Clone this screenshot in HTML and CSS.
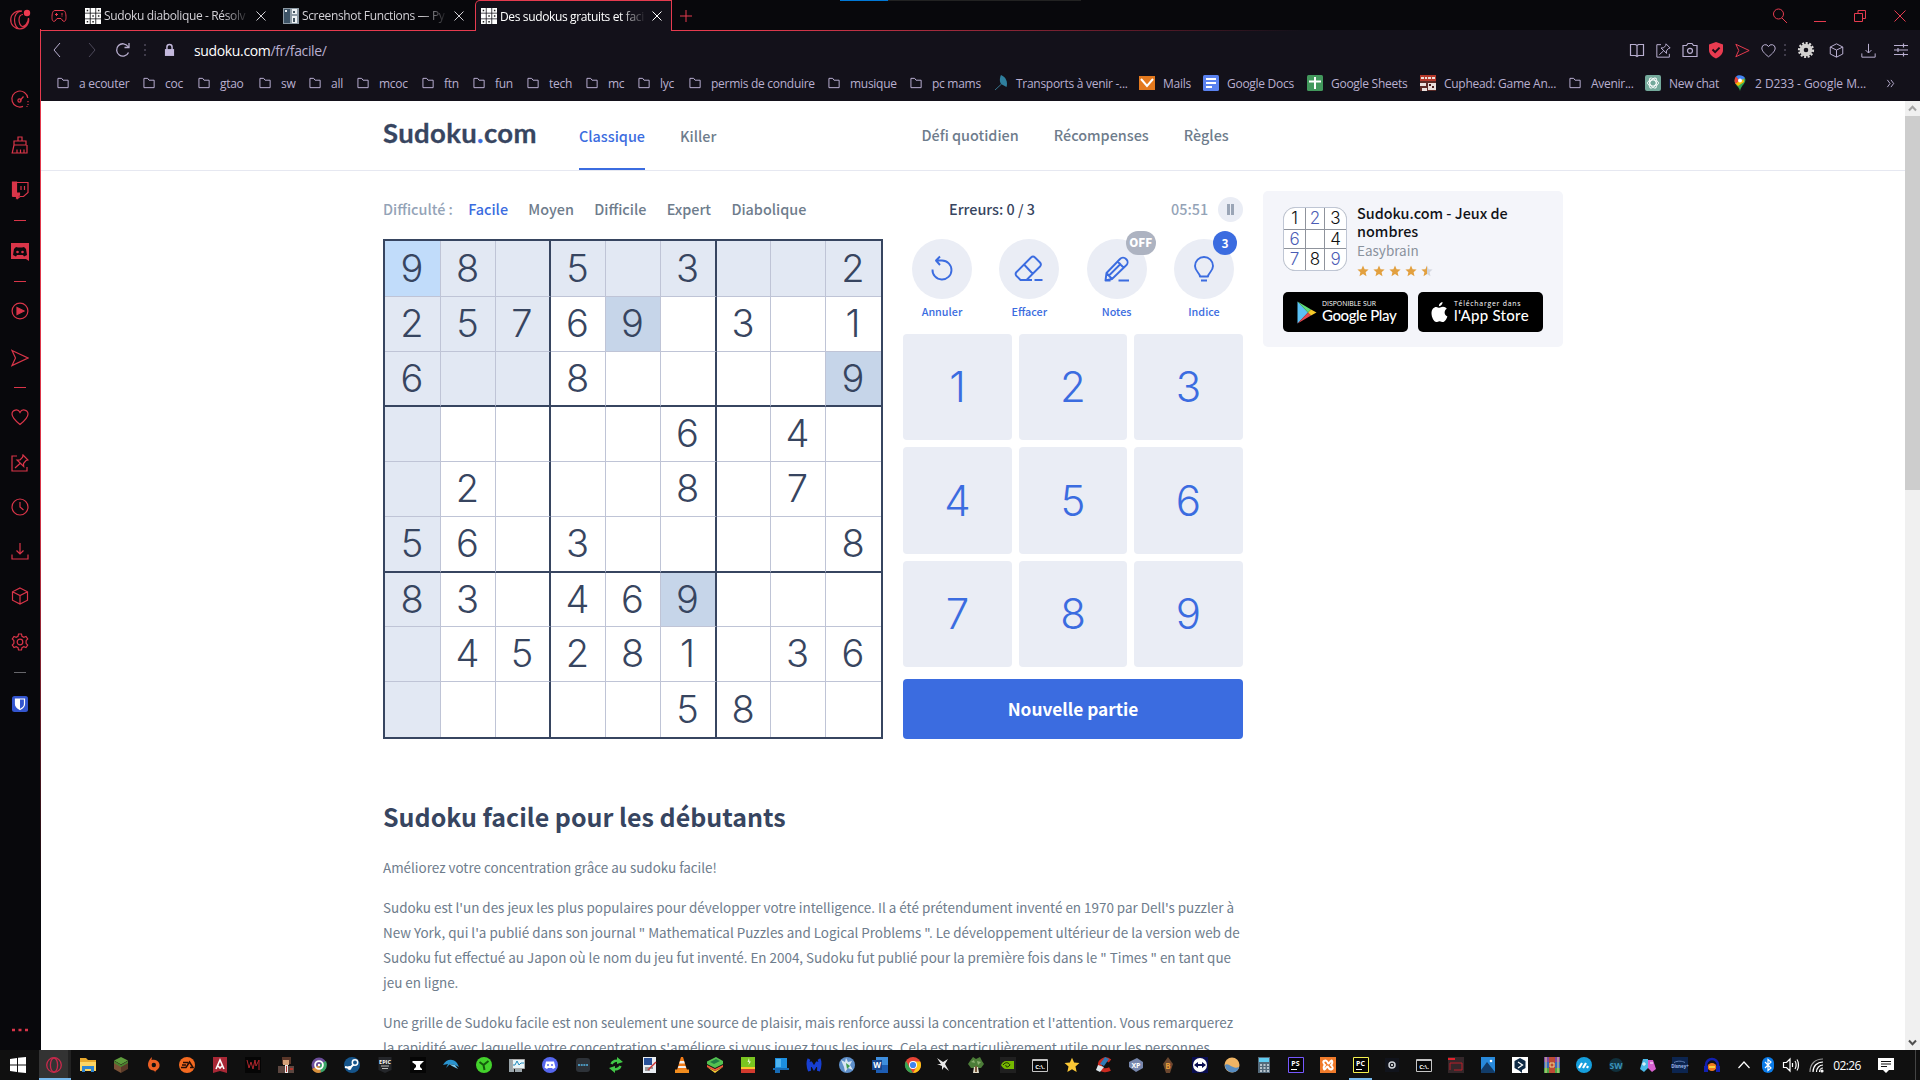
FILE: index.html
```html
<!DOCTYPE html>
<html lang="fr">
<head>
<meta charset="utf-8">
<title>Des sudokus gratuits et faciles</title>
<link rel="stylesheet" href="styles.css">
</head>
<body>
<svg class="defs" width="0" height="0" aria-hidden="true">
  <symbol id="folder" viewBox="0 0 14 12"><path d="M1 1h4l1.500 2H12v8H1z"/></symbol>
  <symbol id="fav" viewBox="0 0 16 16"><path fill="#fff" d="M0 0h4.800v4.800H0zM5.600 0h4.800v4.800H5.600zM11.200 0H16v4.800h-4.800zM0 5.600h4.800v4.800H0zM5.600 5.600h4.800v4.800H5.600zM11.200 5.600H16v4.800h-4.800zM0 11.200h4.800V16H0zM5.600 11.200h4.800V16H5.600zM11.200 11.200H16V16h-4.800z"/><path fill="#222" d="M1.700 1.700h1.500v1.500H1.700zM12.900 1.700h1.500v1.500h-1.500zM7.300 7.300h1.500v1.500H7.300zM1.700 12.900h1.500v1.500H1.700zM7.300 12.900h1.500v1.500H7.300zM12.900 7.300h1.500v1.500h-1.500z"/></symbol>
  <symbol id="close" viewBox="0 0 12 12"><path d="M1.500 1.500l9 9M10.500 1.500l-9 9"/></symbol>
  <symbol id="send" viewBox="0 0 18 18"><path d="M1 1.500L17 9L1 16.500L4.500 9z"/></symbol>
  <symbol id="heart" viewBox="0 0 18 18"><path d="M9 16.500C4 12.500 1 9.500 1 6a4.200 4.200 0 0 1 8-1.600A4.200 4.200 0 0 1 17 6c0 3.500-3 6.500-8 10.500z"/></symbol>
  <symbol id="pin" viewBox="0 0 18 18"><path d="M6 2H1v15h15v-4M12 1l5 5-2 .5-2.500 3 .2 3L6 6l3-.2 2.600-2.600zM9 9.500l-5 4.500"/></symbol>
  <symbol id="download" viewBox="0 0 18 18"><path d="M9 1v11M5.500 8.500L9 12l3.500-3.500M1 12.500V17h16v-4.500"/></symbol>
  <symbol id="cube" viewBox="0 0 18 18"><path d="M9 1l7.500 3.800v8.400L9 17l-7.500-3.800V4.800zM1.500 4.800L9 8.500l7.500-3.700M9 8.500V17"/></symbol>
  <symbol id="star" viewBox="0 0 12 12"><path d="M6 .5l1.600 3.700 4 .3-3 2.700.9 4L6 9.100 2.500 11.200l.9-4-3-2.700 4-.3z"/></symbol>
</svg>

<div class="window">
  <aside class="sidebar">
    <div class="opera-logo"><svg width="22" height="22" viewBox="0 0 22 22"><path d="M13 2.200A9 9 0 1 0 19.500 9M13 2.200C8 2 5.500 6 5.500 11s2.500 9 5.500 9M14 5.500c-2.500 0-4 2.500-4 5.500s1.500 6.500 3.500 6.500S19 15 19.500 9"/><circle cx="18" cy="4" r="3.200" fill="#ee3a50" stroke="none"/></svg></div>
    <div class="s1"><svg viewBox="0 0 18 18"><path d="M12 16.400A8 8 0 1 1 16.800 8M9 10.500l3.500-4M17 11v1.200M17 14v1M15.500 16.500h1"/><circle cx="8.500" cy="10.500" r="1.600"/></svg></div>
    <div><svg viewBox="0 0 18 18"><path d="M7 5V1h4v4M3 5h12v4H3zM3 9L1.200 17H16V9M6 17v-3.500M9.500 17v-3.500M13 17v-3.500"/></svg></div>
    <div><svg viewBox="0 0 18 18"><path d="M2 1.500h15v10l-4.500 4H9l-2.500 2v-2H2z"/><path d="M1.500 1h4v11h3v2l-3 3v-2h-4z" fill="#d93549"/><path d="M10 5v4M13.500 5v4"/></svg></div>
    <hr>
    <div><svg viewBox="0 0 18 18"><path fill="#d93549" stroke="none" d="M0 0h18v18l-3-2H0z"/><path fill="#09090d" stroke="none" d="M5 4l2 .5h4L13 4l2 2 1 6-3 1.500-1-1.500H6l-1 1.500L2 12l1-6z"/><circle cx="6.500" cy="9" r="1.300" fill="#d93549" stroke="none"/><circle cx="11.500" cy="9" r="1.300" fill="#d93549" stroke="none"/></svg></div>
    <hr>
    <div><svg viewBox="0 0 18 18"><circle cx="9" cy="9" r="7.900"/><path fill="#d93549" d="M6 5.500L13 9l-7 3.500z"/></svg></div>
    <div><svg><use href="#send"/></svg></div>
    <hr>
    <div><svg><use href="#heart"/></svg></div>
    <div><svg><use href="#pin"/></svg></div>
    <div><svg viewBox="0 0 18 18"><circle cx="9" cy="9" r="8"/><path d="M9 4v5l3.500 3"/></svg></div>
    <div><svg><use href="#download"/></svg></div>
    <div><svg><use href="#cube"/></svg></div>
    <div><svg viewBox="0 0 18 18"><path d="M7.500 1h3l.5 2.300 1.800 1L15 3.500 16.700 6l-1.600 1.700v2.600L16.700 12 15 14.500l-2.200-.8-1.800 1L10.500 17h-3L7 14.700l-1.800-1-2.200.8L1.300 12l1.600-1.700V7.700L1.300 6 3 3.500l2.200.8 1.800-1z"/><circle cx="9" cy="9" r="2.800"/></svg></div>
    <hr class="grey">
    <div><svg viewBox="0 0 18 18"><rect x="1" y="1" width="16" height="16" rx="2.500" fill="#3355cf" stroke="none"/><path d="M4.500 4h9v5c0 3-2.500 4.500-4.500 5.500C7 13.500 4.500 12 4.500 9z" fill="#3355cf" stroke="#fff"/><path d="M4.500 4H9v10.500C7 13.500 4.500 12 4.500 9z" fill="#fff" stroke="none"/></svg></div>
    <div class="more"><svg viewBox="0 0 18 18"><path fill="#d93549" stroke="none" d="M1 7.700h3v2.600H1zM7.500 7.700h3v2.600h-3zM14 7.700h3v2.600h-3z"/></svg></div>
  </aside>

  <div class="browser">
    <div class="tabbar">
      <span class="pad"><svg width="16" height="14" viewBox="0 0 16 14"><path d="M4 1.500h8c2.500 0 3 3.500 3 7s-1.500 4.500-3 3.500L10 9.500H6L4 12c-1.500 1-3 0-3-3.500s.5-7 3-7zM4 5.500h3M5.500 4v3M10 5h2M11 6.500v1"/></svg></span>
      <div class="tab"><svg class="f"><use href="#fav"/></svg><span class="tt">Sudoku diabolique - Résolv</span><svg class="x"><use href="#close"/></svg></div>
      <div class="tab"><svg class="f" viewBox="0 0 16 16"><path fill="#8d9aa5" d="M0 0h16v16H0z"/><path fill="#3d5366" d="M1 1h6v14H1z"/><path fill="#edf1f4" d="M9 1h5v5H9zM9 8h5v7H9zM2 2h2v2H2z"/><path fill="#40525f" d="M10 3h2v2h-2zM10 10h2v4h-2z"/></svg><span class="tt">Screenshot Functions — Py</span><svg class="x"><use href="#close"/></svg></div>
      <div class="tab active"><svg class="f"><use href="#fav"/></svg><span class="tt">Des sudokus gratuits et faci</span><svg class="x"><use href="#close"/></svg></div>
      <svg class="plus" viewBox="0 0 12 12"><path d="M6 0v12M0 6h12"/></svg>
      <span class="drag"></span>
      <div class="winctl">
        <svg width="16" height="16" viewBox="0 0 16 16"><circle cx="6.500" cy="6" r="5"/><path d="M10 10l5 5"/></svg>
        <svg width="16" height="16" viewBox="0 0 16 16"><path d="M2 13.500h12"/></svg>
        <svg width="16" height="16" viewBox="0 0 16 16"><path d="M2.500 5.500h8v8h-8zM6 5V2.500h7.500V10.500H11"/></svg>
        <svg width="16" height="16" viewBox="0 0 16 16"><path d="M2.500 2.500l11 11M13.500 2.500l-11 11"/></svg>
      </div>
      <i class="edge"></i>
      <i class="loading"></i>
    </div>

    <div class="address">
      <svg class="b1" viewBox="0 0 16 16"><path d="M10 1L4 8l6 7"/></svg>
      <svg class="b2" viewBox="0 0 16 16"><path d="M6 1l6 7-6 7"/></svg>
      <svg class="b3" viewBox="0 0 16 16"><path d="M13.500 10.500A6.200 6.200 0 1 1 13 4.500M14 1v4.500H9.500"/></svg>
      <span class="dots"></span>
      <svg class="lock" viewBox="0 0 12 14"><path d="M1 6h10v7.500H1z"/><path fill="none" stroke="#c4b9dd" stroke-width="1.600" d="M3.200 7V3.800a2.800 2.800 0 0 1 5.600 0V7"/></svg>
      <span class="url"><b>sudoku.com</b>/fr/facile/</span>
      <div class="tools">
        <svg viewBox="0 0 18 18"><path d="M2.500 3.500h5L9 4.500l1.500-1h5v11h-5L9 15.500l-1.500-1h-5zM9 4.500v11"/></svg>
        <svg class="sm"><use href="#pin"/></svg>
        <svg viewBox="0 0 18 18"><path d="M2 4.500h3.500l1.500-2h4l1.500 2H16v11H2z"/><circle cx="9" cy="9.800" r="2.500"/></svg>
        <svg viewBox="0 0 18 18"><path fill="#e93b50" stroke="none" d="M9 1l7 2.500V9c0 4-3 6.500-7 8.500C5 15.500 2 13 2 9V3.500z"/><path stroke="#1b0d17" stroke-width="2" d="M5.500 8.500l2.600 2.600 4.500-4.500"/></svg>
        <svg class="red sm"><use href="#send"/></svg>
        <svg class="sm"><use href="#heart"/></svg>
        <span class="dots"></span>
        <svg viewBox="0 0 18 18"><circle cx="9" cy="9" r="6.800" stroke="#dcdad9" stroke-width="2.600" stroke-dasharray="2 1.500"/><circle cx="9" cy="9" r="4.300" stroke="#d2d0cf" stroke-width="4"/></svg>
        <svg class="sm"><use href="#cube"/></svg>
        <svg class="sm"><use href="#download"/></svg>
        <svg viewBox="0 0 18 18"><path d="M2 4.500h14M2 9h14M2 13.500h14M11.500 2.500v4M6 7v4M11.500 11.500v4"/></svg>
      </div>
    </div>

    <nav class="bookmarks">
      <a><svg><use href="#folder"/></svg>a ecouter</a>
      <a><svg><use href="#folder"/></svg>coc</a>
      <a><svg><use href="#folder"/></svg>gtao</a>
      <a><svg><use href="#folder"/></svg>sw</a>
      <a><svg><use href="#folder"/></svg>all</a>
      <a><svg><use href="#folder"/></svg>mcoc</a>
      <a><svg><use href="#folder"/></svg>ftn</a>
      <a><svg><use href="#folder"/></svg>fun</a>
      <a><svg><use href="#folder"/></svg>tech</a>
      <a><svg><use href="#folder"/></svg>mc</a>
      <a><svg><use href="#folder"/></svg>lyc</a>
      <a><svg><use href="#folder"/></svg>permis de conduire</a>
      <a><svg><use href="#folder"/></svg>musique</a>
      <a><svg><use href="#folder"/></svg>pc mams</a>
      <a><svg class="site s14" viewBox="0 0 14 16"><path fill="#2f7f9e" d="M7 0c5 2 7 7 5.500 12L7 9C5 6 6 2 7 0z"/><path stroke="#36748d" fill="none" d="M7.500 9L1 15"/></svg>Transports à venir -...</a>
      <a><svg class="site" viewBox="0 0 16 16"><path fill="#e3791e" d="M0 1h16v14H0z"/><path stroke="#fff" stroke-width="2" fill="none" d="M2 4l6 7 6-7"/></svg>Mails</a>
      <a><svg class="site" viewBox="0 0 16 16"><rect width="16" height="16" rx="1.500" fill="#5a82f0"/><path stroke="#fff" stroke-width="2" d="M3 4h10M3 8h10M3 12h6"/></svg>Google Docs</a>
      <a><svg class="site" viewBox="0 0 16 16"><rect width="16" height="16" rx="1.500" fill="#42985c"/><path stroke="#fff" stroke-width="2" d="M2 6.500h12M8 2v12"/></svg>Google Sheets</a>
      <a><svg class="site" viewBox="0 0 16 16"><path fill="#b5392b" d="M0 0h16v6H0z"/><path fill="#5a2a26" d="M0 6h16v10H0z"/><path fill="#e9dfdc" d="M1 2h3v2H1zM5 2h2v2H5zM8 2h3v2H8zM12 2h3v2h-3zM0 8h6v3H0zM2 13h5v3H2zM8 8h8v7H8z"/><path fill="#4b2020" d="M9 9h2v2H9zM12 11h2v2h-2z"/></svg>Cuphead: Game An...</a>
      <a><svg><use href="#folder"/></svg>Avenir...</a>
      <a><svg class="site" viewBox="0 0 16 16"><rect width="16" height="16" rx="2" fill="#74a99b"/><g fill="none" stroke="#fff" stroke-width=".9"><ellipse cx="8" cy="8" rx="5.500" ry="3"/><ellipse cx="8" cy="8" rx="5.500" ry="3" transform="rotate(60 8 8)"/><ellipse cx="8" cy="8" rx="5.500" ry="3" transform="rotate(120 8 8)"/></g></svg>New chat</a>
      <a><svg class="site s14" viewBox="0 0 12 16"><path fill="#34a853" d="M6 16C5.500 12 .5 10 .5 5.500L11 3c2 5-4 7-5 13z"/><path fill="#fbbc04" d="M1 8l8-6 1 5-6 4z"/><path fill="#ea4335" d="M.5 6C.5 4 1 2.500 2 1.500L6 5 1.500 9z"/><path fill="#4285f4" d="M2 1.500C4-.5 9-.5 11 3L6 6z"/><circle cx="6" cy="5.500" r="2" fill="#fff"/></svg><span class="wide">2 D233 - Google M...</span></a>
      <a><svg class="chev" viewBox="0 0 10 10"><path d="M1.500 1l3 4-3 4M5.500 1l3 4-3 4"/></svg></a>
    </nav>

    <div class="viewport">
      <div class="page">
        <header class="head">
          <div class="logo">Sudoku<i>.</i>com</div>
          <nav class="modes"><a class="on">Classique</a><a>Killer</a></nav>
          <nav class="links"><a>Défi quotidien</a><a>Récompenses</a><a>Règles</a></nav>
        </header>

        <main class="content">
          <section class="left">
            <div class="levels"><span class="lab">Difficulté :</span><a class="on">Facile</a><a>Moyen</a><a>Difficile</a><a>Expert</a><a>Diabolique</a></div>
            <div class="board">
              <b class="sel">9</b><b class="h">8</b><b class="h"></b><b class="h">5</b><b class="h"></b><b class="h">3</b><b class="h"></b><b class="h"></b><b class="h">2</b>
              <b class="h">2</b><b class="h">5</b><b class="h">7</b><b>6</b><b class="same">9</b><b></b><b>3</b><b></b><b>1</b>
              <b class="h">6</b><b class="h"></b><b class="h"></b><b>8</b><b></b><b></b><b></b><b></b><b class="same">9</b>
              <b class="h"></b><b></b><b></b><b></b><b></b><b>6</b><b></b><b>4</b><b></b>
              <b class="h"></b><b>2</b><b></b><b></b><b></b><b>8</b><b></b><b>7</b><b></b>
              <b class="h">5</b><b>6</b><b></b><b>3</b><b></b><b></b><b></b><b></b><b>8</b>
              <b class="h">8</b><b>3</b><b></b><b>4</b><b>6</b><b class="same">9</b><b></b><b></b><b></b>
              <b class="h"></b><b>4</b><b>5</b><b>2</b><b>8</b><b>1</b><b></b><b>3</b><b>6</b>
              <b class="h"></b><b></b><b></b><b></b><b></b><b>5</b><b>8</b><b></b><b></b>
            </div>
          </section>

          <section class="controls">
            <div class="status"><span class="err">Erreurs: 0 / 3</span><span class="time">05:51</span><span class="pause"></span></div>
            <div class="actions">
              <div class="act"><span class="circle"><svg viewBox="0 0 30 30"><path d="M5.500 15.500A9.500 9.500 0 1 0 15 6.500H9M13 2.500L9 6.500l4 4.500"/></svg></span><span>Annuler</span></div>
              <div class="act"><span class="circle"><svg viewBox="0 0 30 30"><path d="M17 3.500a3 3 0 0 1 4 0l5 5a3 3 0 0 1 0 4L12.500 26H6.500L2.500 22a3 3 0 0 1 0-4zM10.500 11l8 8.500M12.500 26H18M20.500 26H28.500"/></svg></span><span>Effacer</span></div>
              <div class="act"><span class="circle"><svg viewBox="0 0 30 30"><path d="M18 5a4 4 0 0 1 6 0l.5.500a4 4 0 0 1 0 5.500L10 25l-6.500 1.500L4.500 19zM15.500 7.500l6.500 6.500M4.500 19l5.500 6M7 21.500L19 9.500M3.500 26.500h5M16.500 26.500H27"/></svg></span><em class="off">OFF</em><span>Notes</span></div>
              <div class="act"><span class="circle"><svg viewBox="0 0 30 30"><path d="M11 22.500c0-3.500-5-5-5-10.500a9 9 0 0 1 18 0c0 5.500-5 7-5 10.500zM12 26.500h6"/></svg></span><em class="count">3</em><span>Indice</span></div>
            </div>
            <div class="keys"><b>1</b><b>2</b><b>3</b><b>4</b><b>5</b><b>6</b><b>7</b><b>8</b><b>9</b></div>
            <div class="new">Nouvelle partie</div>
          </section>

          <aside class="promo">
            <div class="app">
              <div class="appicon"><b>1</b><b class="u">2</b><b>3</b><b class="u">6</b><b></b><b>4</b><b class="u">7</b><b>8</b><b class="u">9</b></div>
              <div class="appinfo">
                <strong>Sudoku.com - Jeux de<br>nombres</strong>
                <span>Easybrain</span>
                <div class="stars"><svg><use href="#star"/></svg><svg><use href="#star"/></svg><svg><use href="#star"/></svg><svg><use href="#star"/></svg><svg class="half" viewBox="0 0 12 12"><path fill="#d3d7df" d="M6 .5l1.600 3.700 4 .3-3 2.700.9 4L6 9.100z"/><path d="M6 .5v8.600L2.500 11.200l.9-4-3-2.700 4-.3z"/></svg></div>
              </div>
            </div>
            <div class="stores">
              <div class="store play"><svg width="20" height="23" viewBox="0 0 20 23"><path fill="#5bc1f5" d="M.5.500v22L11 11.500z"/><path fill="#5fdc77" d="M.5.500l13.500 8L11 11.500z"/><path fill="#e4474f" d="M.5 22.500l13.500-8L11 11.500z"/><path fill="#f6c928" d="M14 8.500l5.500 3-5.500 3-3-3z"/></svg><div><small>DISPONIBLE SUR</small><span>Google Play</span></div></div>
              <div class="store apple"><svg width="17" height="21" viewBox="0 0 17 21"><path fill="#fff" d="M11.500 0c.2 2-1.600 4.200-3.600 4.200C7.700 2.200 9.500.200 11.500 0zM8.300 5.700c1 0 2-1 3.700-1 1.600 0 3 .9 3.800 2.100-3.200 1.900-2.700 6.300.6 7.600-.9 2.600-2.700 5.600-4.500 5.600-1.300 0-1.700-.8-3.300-.8s-2 .8-3.300.8C3 20 .500 15.500.500 11.300.500 7 3 4.900 5.200 4.900c1.300 0 2.300.8 3.100.8z"/></svg><div><small>Télécharger dans</small><span>l'App Store</span></div></div>
            </div>
          </aside>
        </main>

        <article class="text">
          <h1>Sudoku facile pour les débutants</h1>
          <p>Améliorez votre concentration grâce au sudoku facile!</p>
          <p>Sudoku est l'un des jeux les plus populaires pour développer votre intelligence. Il a été prétendument inventé en 1970 par Dell's puzzler à<br>New York, qui l'a publié dans son journal " Mathematical Puzzles and Logical Problems ". Le développement ultérieur de la version web de<br>Sudoku fut effectué au Japon où le nom du jeu fut inventé. En 2004, Sudoku fut publié pour la première fois dans le " Times " en tant que<br>jeu en ligne.</p>
          <p>Une grille de Sudoku facile est non seulement une source de plaisir, mais renforce aussi la concentration et l'attention. Vous remarquerez<br>la rapidité avec laquelle votre concentration s'améliore si vous jouez tous les jours. Cela est particulièrement utile pour les personnes</p>
        </article>
      </div>
      <div class="scroll"><svg viewBox="0 0 15 15"><path d="M4 9.500l3.500-3.800L11 9.500" stroke="#a3a3a3"/></svg><span></span><svg viewBox="0 0 15 15"><path d="M4 5.500l3.500 3.800L11 5.500" stroke="#505050"/></svg></div>
    </div>
  </div>
</div>

<footer class="taskbar">
  <div class="start"><svg viewBox="0 0 16 16"><path fill="#fff" d="M0 2l7-1v6.500H0zM8 .8L16 0v7.500H8zM0 8.500h7V15l-7-1zM8 8.500h8V16l-8-.8z"/></svg></div>
  <div class="run"><svg viewBox="0 0 16 16"><g fill="none" stroke="#c8294c" stroke-width="1.300"><ellipse cx="8" cy="8" rx="7.300" ry="7.300"/><ellipse cx="8" cy="8" rx="3.600" ry="7"/></g></svg></div>
  <div class="w33">
    <svg viewBox="0 0 16 16"><path fill="#e8a92d" d="M0 1h6l2 2h8v4H0z"/><path fill="#fcd462" d="M0 5h16v9H0z"/><path fill="#2f86d1" d="M2 9h12v6h-3v-3H5v3H2z"/></svg>
    <svg viewBox="0 0 16 16"><path fill="#5d9c3c" d="M8 0l7 3.500L8 7.500 1 3.500z"/><path fill="#7a5237" d="M1 4l7 4v8l-7-4z"/><path fill="#5a3b28" d="M15 4L8 8v8l7-4z"/><path fill="#4a8530" d="M1 4l7 4 7-4v2L8 10 1 6z"/></svg>
    <svg viewBox="0 0 16 16"><path fill="#ec5f24" d="M6 0l-.5 3C12 1 16 8 12 12c-1.500 1.500-3 2-3 4 0-2-.5-2-1.500-2.500C1 13 0 5 6 0z"/><circle cx="7.800" cy="8" r="2.200" fill="#101010"/></svg>
    <svg viewBox="0 0 16 16"><circle cx="8" cy="8" r="8" fill="#f46a20"/><path fill="none" stroke="#260d05" stroke-width="1.500" d="M4 5.500h5M3 8h4M2 10.500h5L10.500 5l3.500 5.500h-3"/></svg>
    <svg viewBox="0 0 16 16"><path fill="#a92836" d="M1 0h14v16l-7-2-7 2z"/><path fill="none" stroke="#fff" stroke-width="1.600" d="M4 12L8 3l4 9M6 9l2 2 2-2"/></svg>
    <svg viewBox="0 0 16 16"><path fill="#050505" d="M0 0h16v16H0z"/><path fill="none" stroke="#b0262c" d="M2 3l2 8 2-6 2 7 2-9 1 6 3-6v10"/></svg>
    <svg viewBox="0 0 16 16"><path fill="#5a3628" d="M4 0h9v7H4z"/><path fill="#d3a179" d="M5 3h6v5H5z"/><path fill="#5c4640" d="M0 9h16v7H0z"/><path fill="#eee" d="M7 8h3v8H7z"/><path fill="#b5372d" d="M8 9h1v6H8zM12 11h3v2h-3z"/></svg>
    <svg viewBox="0 0 16 16"><circle cx="8" cy="8" r="7.500" fill="#6b4d99"/><path fill="#3aa667" d="M8 8L15 4a8 8 0 0 1-5 11.500z"/><path fill="#d7903c" d="M8 8L1 12a8 8 0 0 0 9 3.500z"/><circle cx="8" cy="8" r="3.900" fill="none" stroke="#fff" stroke-width="1.800"/><circle cx="8" cy="8" r="1.200" fill="#fff"/></svg>
    <svg viewBox="0 0 16 16"><circle cx="8" cy="8" r="8" fill="#15548a"/><path stroke="#fff" stroke-width="2" d="M1 10l5 1 5-5"/><circle cx="11" cy="5.500" r="2.700" fill="#15548a" stroke="#fff" stroke-width="1.500"/><circle cx="5.500" cy="11" r="2" fill="#fff"/></svg>
    <svg viewBox="0 0 16 16"><path fill="#24262a" d="M1.500 0h13v13L8 16l-6.500-3z"/><text x="8" y="6.500" class="ic" font-size="5.500">EPIC</text><path stroke="#bbb" d="M4 9h8M5 11.500h6"/></svg>
    <svg viewBox="0 0 16 16"><path fill="#050505" d="M0 0h16v16H0z"/><path fill="#fff" d="M3 4h11l-4 4v2l2 2v1H4v-1l2-2V8L2 5z"/></svg>
    <svg viewBox="0 0 16 16"><path fill="#2a93cf" d="M0 8C3 2 10 1 14 6l2 4-4-2-5-1-4 4 2-4z"/><path fill="#77c7ed" d="M6 7l6 1 3 4-6-3z"/></svg>
    <svg viewBox="0 0 16 16"><circle cx="8" cy="8" r="8" fill="#43d22c"/><path fill="none" stroke="#145b0c" stroke-width="2" d="M3.500 5l4 3 5-4M7.500 8l1 5"/></svg>
    <svg viewBox="0 0 16 16"><path fill="#9aa5aa" d="M0 2h5v13H0zM6 12h7v3H6z"/><path fill="#e9f6fa" stroke="#aaa" d="M3.500 2.500h12v9h-12z"/><path fill="none" stroke="#218abd" d="M4 8h2l2-4 2 4 2-2h3"/></svg>
    <svg viewBox="0 0 16 16"><circle cx="8" cy="8" r="8" fill="#5667ef"/><path fill="#fff" d="M4 4.500h8l1.500 6-2.500 1.500-1-1H6l-1 1L2.500 10.500z"/><circle cx="6" cy="8" r="1" fill="#5667ef"/><circle cx="10" cy="8" r="1" fill="#5667ef"/></svg>
    <svg viewBox="0 0 16 16"><rect x="1" y="1" width="14" height="14" rx="3" fill="#2d3238"/><path stroke="#4b95bb" stroke-width="2" stroke-dasharray="2 .7" d="M3 8h10"/></svg>
    <svg viewBox="0 0 16 16"><path fill="none" stroke="#42c747" stroke-width="2.400" d="M3.500 7c1-3 5-4 8-3M12.500 9c-1 3-5 4-8 3"/><path fill="#42c747" d="M9 0l6 5-6 2zM7 16L1 11l6-2z"/></svg>
    <svg viewBox="0 0 16 16"><path fill="#e9edf2" d="M2 0h13v16H2z"/><path fill="#28519a" d="M3 1h8v7H3z"/><path stroke="#444" d="M4 11h8M4 13h5"/><path stroke="#c33" stroke-width="1.500" d="M15 5l-8 8"/></svg>
    <svg viewBox="0 0 16 16"><path fill="#f27b17" d="M7 0h2l4 13H3z"/><path fill="#f1f1f1" d="M6 4h4l.8 2.500H5.200zM4.500 9h7l.7 2H3.800z"/><path fill="#f28d1e" d="M1 12.500h14V16H1z"/></svg>
    <svg viewBox="0 0 16 16"><path fill="#f5cf35" d="M0 10l8 4 8-4-8 6z"/><path fill="#ef5d3d" d="M0 8l8 4 8-4v2l-8 4-8-4z"/><path fill="#54c252" d="M0 4.500L9 0l7 4v3l-8 4-8-4z"/><path fill="#217d46" d="M3 5l6-3 4 2-6 3z"/></svg>
    <svg viewBox="0 0 16 16"><path fill="#7ac520" d="M1 0h14v10H1z"/><path fill="#f7c72b" d="M1 10h14v2H1z"/><path fill="#d23a2e" d="M1 12h14v4H1z"/><path fill="#e8f7d0" d="M9 1L7.500 5H9l-.5 3L11 4.500H9.500z"/></svg>
    <svg viewBox="0 0 16 16"><path fill="#1c8fe0" d="M2 1h12v10H2z"/><path fill="#176bb4" d="M0 11h16v2H0zM2 13h5v3H2z"/><path fill="#4eb4f2" d="M3 2h5v8H3z"/></svg>
    <svg viewBox="0 0 16 16"><path fill="none" stroke="#173fd2" stroke-width="3" d="M3 2C1 6 2 10 3.500 14 3 9 4 6 5 6l3 5 3-5c1 0 2 3 1.500 8C14 10 15 6 13 2"/></svg>
    <svg viewBox="0 0 16 16"><circle cx="8" cy="8" r="8" fill="#5e8fca"/><path fill="#d7e6f2" d="M2 3l4 2 1-4 2 4 4-1-2 4 3 5-5-2-3 4-1-5z"/><path fill="#3c9a50" d="M7 6l4 3-3 3z"/></svg>
    <svg viewBox="0 0 16 16"><path fill="#3e8ede" d="M4 0h12v16H4z"/><path fill="#1d5db4" d="M4 8h12v8H4z"/><path fill="#164890" d="M0 3h10v10H0z"/><text x="5" y="11" class="ic" font-size="8">W</text></svg>
    <svg viewBox="0 0 16 16"><circle cx="8" cy="8" r="8" fill="#e84435"/><path fill="#35a552" d="M1 4l4.500 8L8 16A8 8 0 0 1 1 4z"/><path fill="#fbc516" d="M8 4.500h7.200A8 8 0 0 1 8 16l3.500-6z"/><circle cx="8" cy="8" r="4" fill="#fff"/><circle cx="8" cy="8" r="3.100" fill="#4084ee"/></svg>
  </div>
  <div class="w32">
    <svg viewBox="0 0 16 16"><path fill="#e8e8e8" d="M1 1l6 4 5-3-3 5 4 7-5-4-2 3V9L1 7h4z"/></svg>
    <svg viewBox="0 0 16 16"><path fill="#4c7d38" d="M2 4l3-4 3 2 4-2 2 4 2 3-3 4H3L0 7z"/><path fill="#8bb070" d="M3 5l3-2 1 3zM9 4l4 1-3 3z"/><path fill="#e3ddc9" d="M6 10h4l1 6H5z"/><path fill="#78593b" d="M7 9h2v6H7z"/></svg>
    <svg viewBox="0 0 16 16"><path fill="#202020" d="M0 0h16v16H0z"/><path fill="#76b900" d="M6 4h8v8H6c-2 0-4-2-5-4 1-2 3-4 5-4z"/><path fill="none" stroke="#1b2b00" d="M3 8c3-4 6-2 7 0-2 3-5 2-4 0"/></svg>
    <svg viewBox="0 0 16 16"><path fill="#080808" stroke="#c4c4c4" d="M.5 2.500h15v12H.5z"/><path stroke="#c4c4c4" stroke-width="2" d="M1 3h14"/><text x="8" y="12" class="ic" font-size="6">C:\.</text></svg>
    <svg class="gold" viewBox="0 0 12 12"><use href="#star" width="12" height="12"/></svg>
    <svg viewBox="0 0 16 16"><path fill="none" stroke="#ca2a20" stroke-width="4" d="M14 4C9 0 3 4 4 9s6 5 10 3"/><path fill="#2f7bb7" d="M9 0l4 2-5 7-4-2z"/><path fill="#dfe7ec" d="M2 8l6 2-4 5-4-2z"/></svg>
    <svg viewBox="0 0 16 16"><path fill="#7787ad" d="M1 5l8-4 6 4v6l-7 4-7-5z"/><text x="8" y="11" class="ic" font-size="7">XP</text></svg>
    <svg viewBox="0 0 16 16"><path fill="#6b472f" d="M8 0l5 7-3 9H6L3 7z"/><text x="8" y="12" class="ic amber" font-size="8">B</text></svg>
    <svg viewBox="0 0 16 16"><path fill="#090d51" d="M0 0h16v16H0z"/><circle cx="8" cy="8" r="7" fill="#fff"/><path fill="#090d51" d="M2 8l4-3v2h4V5l4 3-4 3V9H6v2z"/></svg>
    <svg viewBox="0 0 16 16"><circle cx="8" cy="8" r="7.500" fill="#efb464"/><path fill="#578cc0" d="M1 8c4-3 7 5 14 2-1 8-14 7-14-2z"/></svg>
    <svg viewBox="0 0 16 16"><path fill="#546a7b" d="M2 0h12v16H2z"/><path fill="#60cdf2" d="M3 1h10v4H3z"/><path stroke="#d8e2e8" stroke-width="1.700" stroke-dasharray="2 1.500" d="M4 8h9M4 11h9M4 14h9"/></svg>
    <svg viewBox="0 0 16 16"><path fill="#050505" stroke="#7658ff" d="M.5.500h15v15H.5z"/><text x="7.500" y="8.500" class="ic" font-size="7">PS</text><path stroke="#fff" d="M3 12.500h6"/></svg>
    <svg viewBox="0 0 16 16"><path fill="#f07a2a" d="M0 0h16v16H0z"/><path fill="none" stroke="#fff" stroke-width="2" d="M4 4c2-1 3 0 4 2s3-4 4-2-1 4-1 4 3 3 1 4-3 0-4-2-3 4-4 2 1-4 1-4-3-3-1-4z"/></svg>
    <div class="run2"><svg viewBox="0 0 16 16"><path fill="#050505" stroke="#f4f04d" d="M.5.500h15v15H.5z"/><text x="7.500" y="8.500" class="ic" font-size="7">PC</text><path stroke="#fff" d="M3 12.500h6"/></svg></div>
    <svg viewBox="0 0 16 16"><rect x="1" y="1" width="14" height="14" fill="#11141c"/><circle cx="8" cy="8" r="3" fill="none" stroke="#cfd3d9" stroke-width="1.500"/><circle cx="8" cy="8" r="1" fill="#fff"/></svg>
    <svg viewBox="0 0 16 16"><path fill="#080808" stroke="#c4c4c4" d="M.5 2.500h15v12H.5z"/><path stroke="#c4c4c4" stroke-width="2" d="M1 3h14"/><text x="8" y="12" class="ic" font-size="6">C:\.</text></svg>
    <svg viewBox="0 0 16 16"><path fill="#34272a" d="M0 0h16v16H0z"/><path fill="#e1222b" d="M0 1h7v2H0z"/><path fill="none" stroke="#bb1e28" d="M2 13V6h12v7H6"/></svg>
    <svg viewBox="0 0 16 16"><path fill="#2889da" d="M1 0h14v16H1z"/><path fill="#123c68" d="M1 13l6-8 8 10v1H1z"/><circle cx="11" cy="4" r="1.300" fill="#fff"/></svg>
    <svg viewBox="0 0 16 16"><path fill="#fff" d="M0 0h16v16H0z"/><path fill="#0f2b46" d="M8 1l5.500 3v7L10 13v3l-3-2.500L2.500 11V4z"/><path fill="none" stroke="#fff" stroke-width="1.300" d="M6 5l4.500 3L6 11"/></svg>
    <svg viewBox="0 0 16 16"><path fill="#7e48a6" d="M0 0h16v5H0z"/><path fill="#3867bd" d="M0 5h16v6H0z"/><path fill="#4ba746" d="M0 11h16v5H0z"/><path fill="#bd4a34" d="M5 0h6v16H5z"/><path fill="none" stroke="#ead68c" d="M2 0v16M14 0v16M6 6h4v4H6z"/></svg>
    <svg viewBox="0 0 16 16"><circle cx="8" cy="8" r="8" fill="#159fdd"/><path stroke="#fff" stroke-width="2.200" d="M3 11l3-5M7 11l3-5M11 11l1-2"/></svg>
    <svg viewBox="0 0 16 16"><circle cx="8" cy="8" r="7" fill="#10303c"/><text x="8" y="11.500" class="ic teal" font-size="8.500">SW</text></svg>
    <svg viewBox="0 0 16 16"><path fill="#4ab8e8" d="M3 2h5v9l-4 4-4-3z"/><path fill="#d760cf" d="M8 3h5l3 9-4 3-4-4z"/><path stroke="#fff" d="M4 5v4M2 7h4M10 6h3"/></svg>
    <svg viewBox="0 0 16 16"><path fill="#0c2550" d="M0 0h16v16H0z"/><path fill="none" stroke="#5f7db3" d="M2 5.500c4-2 8-1.500 11 0"/><text x="8" y="10.500" class="ic pale" font-size="4.500">Disney+</text></svg>
    <svg viewBox="0 0 16 16"><path fill="none" stroke="#1220b0" stroke-width="2.500" d="M2 11V8a6 6 0 0 1 12 0v3"/><ellipse cx="8" cy="10" rx="4.500" ry="4" fill="#f07921"/><path fill="#f7d13b" d="M5 9h6v2H5z"/><path fill="#1220b0" d="M0 9h4v6H0zM12 9h4v6h-4z"/></svg>
  </div>
  <div class="tray">
    <svg viewBox="0 0 16 16"><path d="M2.500 11L8 5l5.500 6"/></svg>
    <svg viewBox="0 0 16 16"><rect x="2" width="12" height="16" rx="6" fill="#0a7be8" stroke="none"/><path d="M5 5l6 6-3 2.500v-11L11 5l-6 6"/></svg>
    <svg viewBox="0 0 16 16"><path d="M.5 5.500h3L7 2v12L3.500 10.500h-3zM9.500 6v4M12 4c1.500 2 1.500 6 0 8M14 2.500c2 3 2 8 0 11"/></svg>
    <svg viewBox="0 0 16 16"><path stroke="#999" d="M1 15C1 7 6 2 14 2"/><path d="M4 15c0-6 4-10 10-10M7.500 15c0-4 3-7 6.500-7M10.500 15c0-2 1.500-4 3.500-4"/><circle cx="13" cy="14" r="1" fill="#fff"/></svg>
    <time>02:26</time>
    <svg viewBox="0 0 16 16"><path fill="#fff" stroke="none" d="M0 1h16v12h-5l-3 3-3-3H0z"/><path stroke="#111" d="M3 4.500h10M3 7h10M3 9.500h6"/></svg>
  </div>
  <span class="peek"></span>
</footer>
</body>
</html>
```
FILE: styles.css
```css
* { box-sizing: border-box; }
body { margin: 0; width: 1920px; height: 1080px; overflow: hidden; background: #08080c; font-family: "Noto Sans CJK SC", "Noto Sans", sans-serif; display: flex; flex-direction: column; }
svg { display: block; flex: none; fill: none; overflow: visible; }
.defs { position: absolute; }
.window { height: 1050px; display: flex; }

/* sidebar */
.sidebar { width: 40px; background: #08080c; display: grid; justify-items: center; align-content: start; grid-template-rows: 76px 46px 46px 44px 16px 47px 12px 48px 45px 14px 46px 45px 44px 44px 46px 45px 17px 45px 1fr; height: 1050px; }
.sidebar > div, .sidebar > hr { display: flex; align-self: center; }
.sidebar svg { width: 18px; height: 18px; stroke: #d93549; stroke-width: 1.2; }
.sidebar .opera-logo { align-self: start; padding-top: 9px; }
.sidebar .opera-logo svg { width: 22px; height: 22px; }
.sidebar hr { width: 12px; height: 1px; border: 0; margin: 0; background: #d93549; }
.sidebar hr.grey { background: #66666b; }
.sidebar .more { align-self: end; padding-bottom: 11px; }

.browser { width: 1880px; border-left: 1px solid; border-image: linear-gradient(#08080c 30px, #e63b4f 30px, #d93549 500px, #08080c 900px) 1; display: flex; flex-direction: column; }

/* tabs */
.tabbar { height: 31px; background: #08080c; display: flex; align-items: center; position: relative; font: 12px "Open Sans", sans-serif; color: #d2d0d6; }
.tabbar svg { stroke: #e63b4f; }
.pad { width: 38px; padding-left: 10px; }
.tab { width: 198px; height: 31px; display: flex; align-items: center; padding-left: 6px; }
.tab .f { width: 16px; height: 16px; stroke: none; margin-right: 3px; }
.tab .x { width: 12px; height: 12px; stroke: #d2d0d6; margin-left: 7px; }
.tt { width: 144px; white-space: nowrap; letter-spacing: -.36px; -webkit-mask-image: linear-gradient(90deg, #000 120px, transparent 146px); }
.tab.active { position: relative; z-index: 2; width: 197px; background: #13111a; border: 1px solid #e63b4f; border-bottom: 0; border-radius: 5px 0 0 0; color: #fff; padding-left: 5px; }
.tab.active .x { stroke: #fff; }
.plus { width: 12px; height: 12px; margin-left: 8px; }
.drag { flex: 1; }
.winctl { display: flex; gap: 24px; margin-right: 12px; }
.edge { position: absolute; left: 0; right: 0; bottom: 0; height: 1px; background: linear-gradient(90deg, #e63b4f 700px, #5a1a28 1100px, #13111a 1260px); }
.loading { position: absolute; left: 799px; top: 0; width: 241px; height: 1px; background: linear-gradient(90deg, #0078d7 48px, #222 48px); }

/* address row */
.address { height: 38px; background: #13111a; display: flex; align-items: center; }
.address svg { stroke: #b9afd0; }
.b1, .b2, .b3 { width: 16px; height: 16px; margin-right: 17px; }
.b1 { margin-left: 9px; }
.address .b2 { stroke: #4d495a; }
.b2 { margin-right: 16px; }
.b3 { margin-right: 13px; stroke-width: 1.3; }
.dots { width: 2px; height: 12px; background: repeating-linear-gradient(#3f3b4a 0 2px, transparent 2px 5px); }
.lock { width: 11px; height: 14px; margin: 0 19px 0 18px; }
.address .lock { fill: #c4b9dd; stroke: none; }
.url { font: 14px "Open Sans", sans-serif; color: #b9afd0; letter-spacing: -.35px; flex: 1; }
.url b { font-weight: 400; color: #fff; }
.tools { width: 291px; display: grid; grid-template-columns: 26px 27px 26px 26px 26px 26px 8px 34px 27px 37px 28px; margin-right: 5px; align-items: center; justify-items: center; }
.tools svg { width: 18px; height: 18px; stroke-width: 1.2; }
.tools svg.sm { width: 15px; height: 15px; }
.tools svg.red { stroke: #e63b4f; }

/* bookmarks */
.bookmarks { height: 32px; background: #13111a; display: grid; align-items: center; grid-template-columns: 86px 55px 61px 50px 48px 65px 51px 54px 59px 52px 51px 139px 82px 84px 145px 64px 104px 113px 149px 76px 88px 153px 20px; padding: 0 0 4px 16px; font: 12px "Open Sans", sans-serif; letter-spacing: -.28px; color: #b9afd0; }
.bookmarks a { display: flex; align-items: center; white-space: nowrap; }
.bookmarks svg { width: 13px; height: 12px; stroke: #c4b9dd; margin-right: 9px; }
.bookmarks svg.site { width: 16px; height: 16px; stroke: none; margin-right: 8px; }
.bookmarks svg.s14 { width: 14px; }
.bookmarks svg.chev { width: 9px; height: 9px; }
.wide { letter-spacing: -.05px; }

/* viewport */
.viewport { height: 949px; background: #fff; display: flex; }
.page { width: 1864px; height: 949px; overflow: hidden; }
.scroll { width: 15px; background: #f0f0f0; display: flex; flex-direction: column; }
.scroll svg { width: 15px; height: 15px; stroke-width: 2; }
.scroll span { height: 374px; background: #cdcdcd; margin-bottom: auto; }

.head { height: 70px; border-bottom: 1px solid #e6e8f1; padding-left: 342px; display: flex; color: #6e7c8c; font-weight: 500; font-size: 14.4px; line-height: 20px; }
.logo { width: 196px; font: 700 27.500px/30px Lato, sans-serif; color: #374560; padding-top: 17px; letter-spacing: .35px; -webkit-text-stroke: .3px #374560; }
.logo i { font-style: normal; color: #3b6ce0; -webkit-text-stroke-color: #3b6ce0; }
.modes { display: flex; gap: 35px; width: 342.5px; padding-top: 25px; }
.modes a { height: 44px; white-space: nowrap; }
.on { color: #3b6ce0; }
.modes .on { border-bottom: 2px solid #3b6ce0; }
.links { display: flex; gap: 35px; padding-top: 24px; white-space: nowrap; }

.content { display: flex; padding: 20px 0 0 342px; }
.left { width: 500px; }
.levels { height: 48px; line-height: 36px; display: flex; gap: 20.300px; font-weight: 500; font-size: 14.4px; color: #6e7c8c; white-space: nowrap; }
.levels .lab { color: #94a3b7; margin-right: -5px; }
.board { width: 500px; height: 500px; border: 2px solid #374560; display: grid; grid-template: 56px 55px 55px 55px 55px 56px 54px 55px 55px / 56px 55px 55px 55px 55px 56px 54px 55px 55px; color: #374560; font: 300 38px Inter, sans-serif; }
.board b { font-weight: 300; display: flex; align-items: center; justify-content: center; border: 0 solid #bfc4d6; border-width: 0 1px 1px 0; line-height: 1; padding: 0 1px 2px 0; }
.board b:nth-child(9n+3), .board b:nth-child(9n+6) { border-right: 2px solid #374560; }
.board b:nth-child(9n) { border-right: 0; }
.board b:nth-child(n+19):nth-child(-n+27), .board b:nth-child(n+46):nth-child(-n+54) { border-bottom: 2px solid #374560; }
.board b:nth-child(n+73) { border-bottom: 0; }
.board .h { background: #e2e8f3; }
.board .sel { background: #c1dcfa; }
.board .same { background: #c6d5e9; }

.controls { width: 340px; margin-left: 20px; }
.status { height: 48px; display: grid; grid-template-columns: 46px 222px 47px 25px; font-weight: 500; font-size: 14.4px; line-height: 36px; color: #374560; white-space: nowrap; }
.err { grid-column: 2; }
.time { color: #94a3b7; }
.pause { width: 25px; height: 25px; border-radius: 50%; background: linear-gradient(#9aa5b6, #9aa5b6) 9px 7px / 3px 11px no-repeat, linear-gradient(#9aa5b6, #9aa5b6) 13px 7px / 3px 11px no-repeat, #eaedf5; margin-top: 6px; }
.actions { display: flex; justify-content: space-between; padding: 0 9px; height: 95px; }
.act { position: relative; width: 60px; text-align: center; font-size: 10.8px; font-weight: 500; color: #3b6ce0; line-height: 24px; white-space: nowrap; }
.circle { display: flex; height: 60px; border-radius: 50%; background: #eaedf5; align-items: center; justify-content: center; }
.circle svg { width: 30px; height: 30px; stroke: #3b6ce0; stroke-width: 1.9; stroke-linejoin: round; }
.act em { position: absolute; top: -8px; height: 24px; border-radius: 12px; color: #fff; font: 700 12px/23px "Noto Sans CJK SC", sans-serif; }
.act .off { left: 39px; width: 30px; background: #adb3c1; font-weight: 900; font-size: 11.5px; }
.act .count { left: 39px; width: 24px; background: #3b6ce0; }
.keys { display: grid; grid-template: 106px 107px 106px / 109px 108px 109px; gap: 7px; height: 333px; color: #3b6ce0; font: 300 42px Inter, sans-serif; }
.keys b { font-weight: 300; background: #eaedf5; border-radius: 4px; display: flex; align-items: center; justify-content: center; padding-bottom: 1px; }
.new { margin-top: 12px; height: 60px; border-radius: 4px; background: #3b6ce0; color: #fff; font-weight: 700; font-size: 17.3px; line-height: 59px; text-align: center; }

.promo { width: 300px; height: 156px; margin-left: 20px; background: #f4f5fa; border-radius: 5px; padding: 16px 20px 15px; }
.app { display: flex; height: 85px; }
.appicon { width: 64px; height: 64px; border: 1px solid #bfc6d4; border-radius: 12px; overflow: hidden; display: grid; grid-template: 22px 19px 21px / 22px 19px 21px; background: #8f939c; margin-right: 10px; font: 300 17px Inter, sans-serif; color: #111; }
.appicon b { font-weight: 300; background: #fff; margin: 0 1px 1px 0; display: flex; align-items: center; justify-content: center; line-height: 1; }
.appicon b:nth-child(3n) { margin-right: 0; }
.appicon b:nth-child(n+7) { margin-bottom: 0; }
.appicon .u { color: #4b5cb5; }
.appinfo { display: flex; flex-direction: column; margin-top: -3px; }
.appinfo strong { font-size: 14.4px; line-height: 18px; font-weight: 500; color: #111318; white-space: nowrap; }
.appinfo span { font-size: 13.500px; line-height: 21px; color: #8a929d; }
.stars { display: flex; gap: 4px; padding: 4px 0 0 0; }
.stars svg { width: 12px; height: 12px; fill: #e2a03f; }
.stores { display: flex; gap: 10px; }
.store { width: 125px; height: 40px; border-radius: 5px; background: #000; color: #fff; display: flex; align-items: center; padding-left: 14px; font-family: "Open Sans", sans-serif; gap: 5px; white-space: nowrap; }
.store div { display: flex; flex-direction: column; padding-bottom: 2px; }
.store small { font: 6.900px/9px "Open Sans", sans-serif; }
.store span { font: 500 15px/15px Lato, sans-serif; letter-spacing: -.4px; }
.store.apple { padding-left: 13px; gap: 6px; }
.apple small { letter-spacing: .75px; }
.store.apple span { letter-spacing: .3px; }

.text { padding: 57px 0 0 342px; color: #6e7c8c; font-size: 13.430px; line-height: 25px; white-space: nowrap; }
.text h1 { margin: 0 0 19px; font-size: 25px; line-height: 40px; font-weight: 700; color: #374560; }
.text p { margin: 0 0 15px; }

/* taskbar */
.taskbar { height: 30px; background: #101010; display: flex; align-items: center; }
.taskbar svg { width: 16px; height: 16px; }
.start { width: 39px; padding-left: 10px; }
.run { width: 32px; height: 30px; background: linear-gradient(90deg, #333 29px, #222 29px); padding: 7px 0 0 7px; border-bottom: 2px solid #76b9ed; }
.w33 { display: grid; grid-template-columns: repeat(26, 33px); justify-items: center; margin-left: 0; }
.w32 { display: grid; grid-template-columns: repeat(25, 32px); justify-items: center; align-items: center; margin-left: -1px; height: 30px; }
.run2 { height: 30px; width: 23px; border-bottom: 2px solid #76b9ed; padding: 7px 0 0 4px; }
.w32 .gold { fill: #fbc835; }
.ic { fill: #fff; text-anchor: middle; font-family: "Open Sans", sans-serif; font-weight: 700; }
.amber { fill: #e59c3a; }
.teal { fill: #3b94ba; }
.pale { fill: #9db6e6; }
.tray { display: grid; grid-template-columns: 31px 18px 27px 26px 34px 30px; justify-items: center; align-items: center; color: #fff; font: 12px "Open Sans", sans-serif; letter-spacing: -.6px; }
.tray svg { stroke: #fff; stroke-width: 1.2; }
.tray svg:last-child { justify-self: end; }
.peek { width: 1px; height: 30px; background: #444; margin-left: auto; margin-right: 4px; }
```
